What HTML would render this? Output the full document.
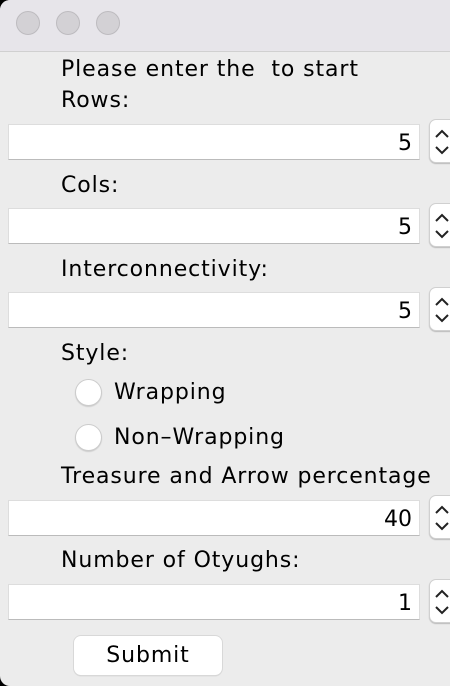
<!DOCTYPE html>
<html><head><style>
*{margin:0;padding:0;box-sizing:border-box}
body{width:450px;height:686px;background:#000;overflow:hidden;font-family:"DejaVu Sans","Liberation Sans",sans-serif;position:relative}
.win{position:absolute;left:0;top:0;width:450px;height:686px;background:#ececec;border-radius:10px 0 0 10px;overflow:hidden}
.tb{position:absolute;left:0;top:0;width:450px;height:52px;background:#e7e5ea;border-bottom:1px solid #d0d0d0}
.dot{position:absolute;top:11px;width:24px;height:24px;border-radius:50%;background:#d3d1d5;border:1px solid #bdbbbf}
.l{position:absolute;left:61px;font-size:22px;letter-spacing:0.9px;color:#000;line-height:26px;white-space:nowrap}
.f{position:absolute;left:8px;width:412px;height:36px;background:#fff;border:1px solid #ddd;border-bottom:1px solid #bbb;font-size:22px;text-align:right;padding-right:7px;line-height:38px;color:#000}
.sp{position:absolute;left:429px;width:30px;height:44px;background:#fff;border:1px solid #d0d0d0;border-radius:7px;box-shadow:0 1px 1px #bbb}
.sp svg{position:absolute;left:2px;top:3px}
.r{position:absolute;left:75px;width:27px;height:27px;border-radius:50%;background:#fff;border:1px solid #ccc;box-shadow:0 1px 1px #ccc}
.btn{position:absolute;left:74px;top:636px;width:148px;height:39px;background:#fff;border-radius:7px;box-shadow:0 0 0 1px #d8d8d8,0 1px 1px #bbb;font-size:22px;letter-spacing:0.9px;text-align:center;line-height:39px;color:#000}
</style></head><body>
<div class="win">
<div class="tb"><div class="dot" style="left:16px"></div><div class="dot" style="left:56px"></div><div class="dot" style="left:96px"></div></div>
<div class="l" style="top:57px">Please enter the &nbsp;to start</div>
<div class="l" style="top:88px">Rows:</div>
<div class="f" style="top:124px">5</div>
<div class="sp" style="top:119px"><svg width="20" height="38"><path d="M4 14 L10 8 L16 14 M4 24 L10 30 L16 24" stroke="#222" stroke-width="2" fill="none"/></svg></div>
<div class="l" style="top:173px">Cols:</div>
<div class="f" style="top:208px">5</div>
<div class="sp" style="top:203px"><svg width="20" height="38"><path d="M4 14 L10 8 L16 14 M4 24 L10 30 L16 24" stroke="#222" stroke-width="2" fill="none"/></svg></div>
<div class="l" style="top:257px">Interconnectivity:</div>
<div class="f" style="top:292px">5</div>
<div class="sp" style="top:287px"><svg width="20" height="38"><path d="M4 14 L10 8 L16 14 M4 24 L10 30 L16 24" stroke="#222" stroke-width="2" fill="none"/></svg></div>
<div class="l" style="top:341px">Style:</div>
<div class="r" style="top:379px"></div>
<div class="l" style="left:114px;top:380px">Wrapping</div>
<div class="r" style="top:424px"></div>
<div class="l" style="left:114px;top:425px">Non–Wrapping</div>
<div class="l" style="top:464px">Treasure and Arrow percentage</div>
<div class="f" style="top:500px">40</div>
<div class="sp" style="top:495px"><svg width="20" height="38"><path d="M4 14 L10 8 L16 14 M4 24 L10 30 L16 24" stroke="#222" stroke-width="2" fill="none"/></svg></div>
<div class="l" style="top:548px">Number of Otyughs:</div>
<div class="f" style="top:584px">1</div>
<div class="sp" style="top:579px"><svg width="20" height="38"><path d="M4 14 L10 8 L16 14 M4 24 L10 30 L16 24" stroke="#222" stroke-width="2" fill="none"/></svg></div>
<div class="btn">Submit</div>
</div>
</body></html>
